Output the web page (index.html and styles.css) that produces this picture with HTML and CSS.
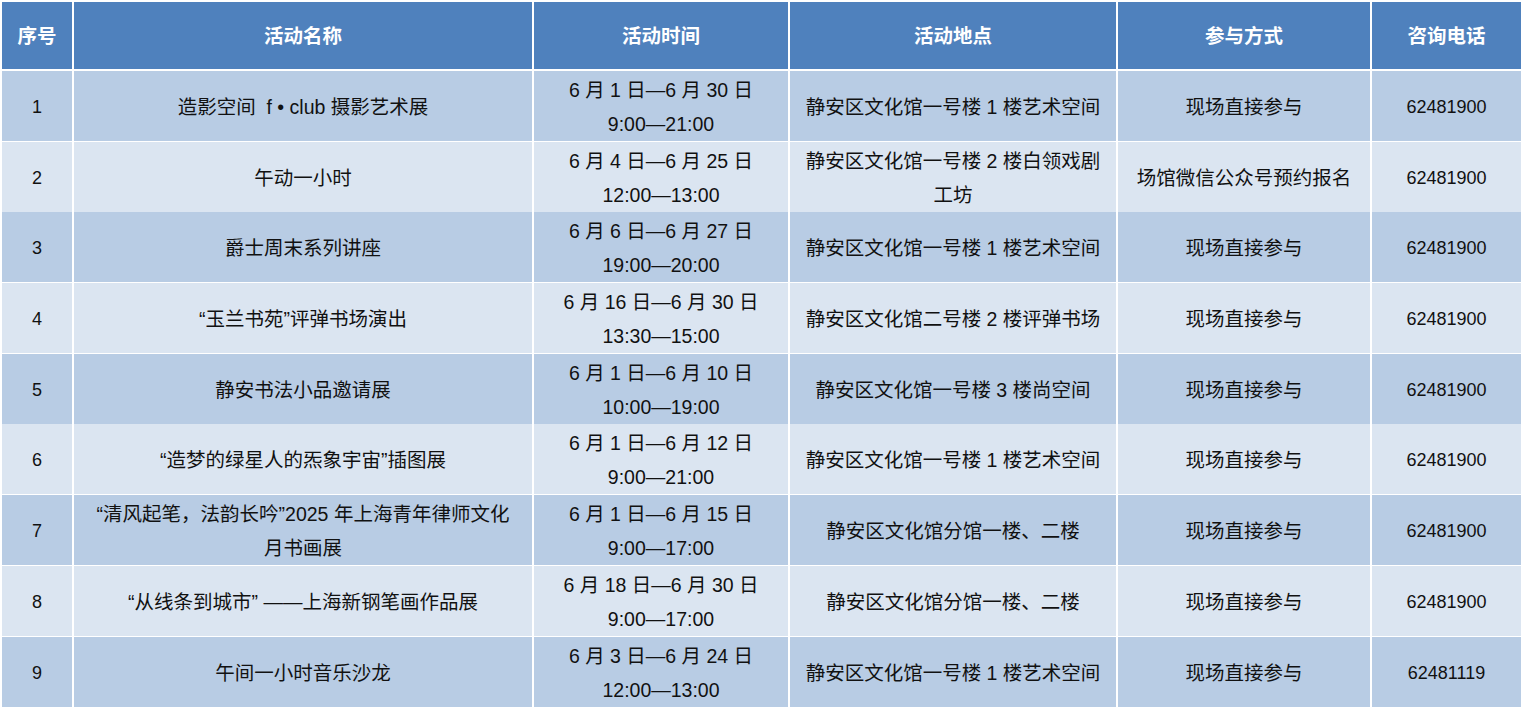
FILE: index.html
```html
<!DOCTYPE html>
<html lang="zh-CN">
<head>
<meta charset="utf-8">
<title>活动安排</title>
<link rel="stylesheet" href="styles.css">
</head>
<body>
<div class="table">
  <div class="row head">
    <div class="cell">序号</div>
    <div class="cell">活动名称</div>
    <div class="cell">活动时间</div>
    <div class="cell">活动地点</div>
    <div class="cell">参与方式</div>
    <div class="cell">咨询电话</div>
  </div>
  <div class="row odd">
    <div class="cell num">1</div>
    <div class="cell">造影空间&nbsp; f • club 摄影艺术展</div>
    <div class="cell">6 月 1 日—6 月 30 日<br>9:00—21:00</div>
    <div class="cell">静安区文化馆一号楼 1 楼艺术空间</div>
    <div class="cell">现场直接参与</div>
    <div class="cell num">62481900</div>
  </div>
  <div class="row even">
    <div class="cell num">2</div>
    <div class="cell">午动一小时</div>
    <div class="cell">6 月 4 日—6 月 25 日<br>12:00—13:00</div>
    <div class="cell">静安区文化馆一号楼 2 楼白领戏剧<br>工坊</div>
    <div class="cell">场馆微信公众号预约报名</div>
    <div class="cell num">62481900</div>
  </div>
  <div class="row odd">
    <div class="cell num">3</div>
    <div class="cell">爵士周末系列讲座</div>
    <div class="cell">6 月 6 日—6 月 27 日<br>19:00—20:00</div>
    <div class="cell">静安区文化馆一号楼 1 楼艺术空间</div>
    <div class="cell">现场直接参与</div>
    <div class="cell num">62481900</div>
  </div>
  <div class="row even">
    <div class="cell num">4</div>
    <div class="cell">“玉兰书苑”评弹书场演出</div>
    <div class="cell">6 月 16 日—6 月 30 日<br>13:30—15:00</div>
    <div class="cell">静安区文化馆二号楼 2 楼评弹书场</div>
    <div class="cell">现场直接参与</div>
    <div class="cell num">62481900</div>
  </div>
  <div class="row odd">
    <div class="cell num">5</div>
    <div class="cell">静安书法小品邀请展</div>
    <div class="cell">6 月 1 日—6 月 10 日<br>10:00—19:00</div>
    <div class="cell">静安区文化馆一号楼 3 楼尚空间</div>
    <div class="cell">现场直接参与</div>
    <div class="cell num">62481900</div>
  </div>
  <div class="row even">
    <div class="cell num">6</div>
    <div class="cell">“造梦的绿星人的炁象宇宙”插图展</div>
    <div class="cell">6 月 1 日—6 月 12 日<br>9:00—21:00</div>
    <div class="cell">静安区文化馆一号楼 1 楼艺术空间</div>
    <div class="cell">现场直接参与</div>
    <div class="cell num">62481900</div>
  </div>
  <div class="row odd">
    <div class="cell num">7</div>
    <div class="cell">“清风起笔，法韵长吟”2025 年上海青年律师文化<br>月书画展</div>
    <div class="cell">6 月 1 日—6 月 15 日<br>9:00—17:00</div>
    <div class="cell">静安区文化馆分馆一楼、二楼</div>
    <div class="cell">现场直接参与</div>
    <div class="cell num">62481900</div>
  </div>
  <div class="row even">
    <div class="cell num">8</div>
    <div class="cell">“从线条到城市” ——上海新钢笔画作品展</div>
    <div class="cell">6 月 18 日—6 月 30 日<br>9:00—17:00</div>
    <div class="cell">静安区文化馆分馆一楼、二楼</div>
    <div class="cell">现场直接参与</div>
    <div class="cell num">62481900</div>
  </div>
  <div class="row odd">
    <div class="cell num">9</div>
    <div class="cell">午间一小时音乐沙龙</div>
    <div class="cell">6 月 3 日—6 月 24 日<br>12:00—13:00</div>
    <div class="cell">静安区文化馆一号楼 1 楼艺术空间</div>
    <div class="cell">现场直接参与</div>
    <div class="cell num">62481119</div>
  </div>
</div>
</body>
</html>
```
FILE: styles.css
```css
html, body {
  margin: 0;
  padding: 0;
  background: #ffffff;
}

body {
  font-family: "Liberation Sans", "Noto Sans CJK SC", sans-serif;
  font-size: 19.5px;
  color: #111111;
}

.table {
  display: flex;
  flex-direction: column;
  gap: 2px;
  padding: 2px;
  width: 1519px;
}

.row {
  display: grid;
  grid-template-columns: 70px 458px 254px 326px 252px 149px;
  gap: 2px;
  height: 68.7px;
}

.row.head {
  height: 67px;
}

.cell {
  display: flex;
  align-items: center;
  justify-content: center;
  text-align: center;
  line-height: 34px;
  padding-top: 2px;
  box-sizing: border-box;
  white-space: nowrap;
}

.head .cell {
  background: #4f81bd;
  color: #ffffff;
  font-weight: 700;
  padding-top: 0;
}

.odd .cell {
  background: #b8cce4;
}

.even .cell {
  background: #dbe5f1;
}

.cell.num {
  font-size: 18px;
}
```
